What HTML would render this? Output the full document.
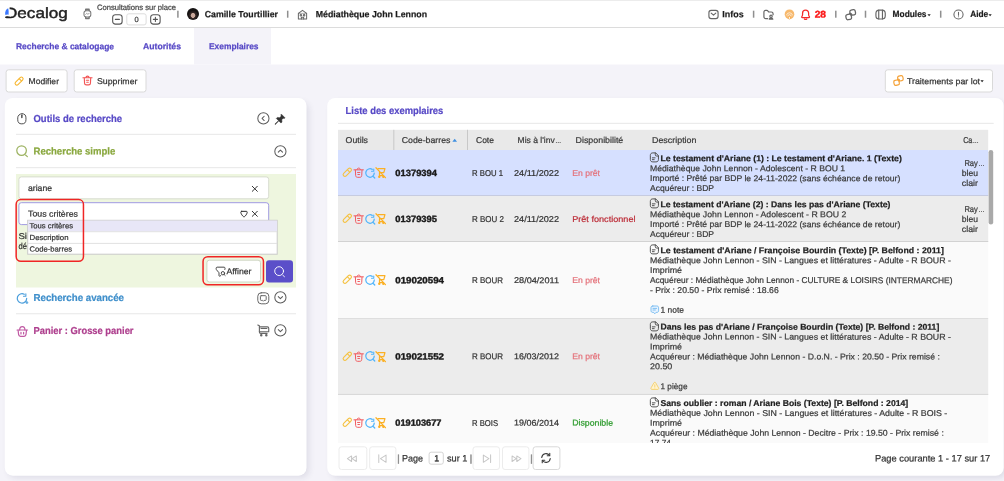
<!DOCTYPE html>
<html lang="fr">
<head>
<meta charset="utf-8">
<title>Decalog - Exemplaires</title>
<style>
html,body{margin:0;padding:0;background:#f4f3f9;overflow:hidden;}
body{font-family:"Liberation Sans",sans-serif;width:1004px;height:481px;overflow:hidden;position:relative;}
#app{will-change:transform;position:absolute;left:0;top:0;width:1004px;height:481px;overflow:hidden;background:#f4f3f9;}
#tb{position:absolute;left:0;top:0;width:1004px;height:443px;overflow:hidden;}
.t{-webkit-text-stroke:0.22px currentColor;transform-origin:0 50%;position:absolute;white-space:pre;line-height:12px;height:12px;color:#333;display:block;}
.b{position:absolute;box-sizing:border-box;display:block;}
.i{position:absolute;fill:none;stroke:currentColor;stroke-linecap:round;stroke-linejoin:round;overflow:visible;}
</style>
</head>
<body>
<div id="app">
<svg class="b" style="left:-1px;top:-1px" width="1006" height="30"><rect x="1" y="1" width="1004" height="28" fill="#fff"/><rect x="1" y="1" width="1004" height="1" fill="#ececec"/><rect x="1" y="28" width="1004" height="1" fill="#dcdcdc"/></svg>
<svg class="b" style="left:-1px;top:27px" width="1006" height="39"><rect x="1" y="1" width="1004" height="36.5" fill="#fff"/></svg>
<svg class="b" style="left:193px;top:27px" width="79" height="39"><rect x="1" y="1" width="77" height="36.5" fill="#f4f3f9"/></svg>
<svg class="i" style="left:83.30px;top:8.45px;width:8.80px;height:11.70px;color:#757575;stroke-width:2.1;" viewBox="0 0 18 24"><rect x="2" y="5.500" width="14" height="13" rx="4.500"/><path d="M5.500 5V2.500h7V5M5.500 19v2.500h7V19" stroke-width="2.800"/><path d="M5.500 13l2.200-2 2 1.600 2.800-1.200" stroke-width="1.400"/></svg>
<svg class="i" style="left:112.15px;top:13.90px;width:10.80px;height:10.80px;color:#555;stroke-width:2.4;" viewBox="0 0 24 24"><rect x="1.5" y="1.5" width="21" height="21" rx="6"/><path d="M7.5 12h9"/></svg>
<svg class="b" style="left:125px;top:12px" width="23" height="15"><rect x="1.8" y="1.8" width="19.3" height="11.1" rx="2" fill="#fff" stroke="#dcdcdc" stroke-width="1"/></svg>
<svg class="i" style="left:149.60px;top:13.90px;width:10.80px;height:10.80px;color:#555;stroke-width:2.4;" viewBox="0 0 24 24"><rect x="1.5" y="1.5" width="21" height="21" rx="6"/><path d="M7.5 12h9M12 7.5v9"/></svg>
<svg class="b" style="left:176px;top:9px" width="4" height="10"><rect x="1.15" y="1.7" width="1.5" height="7" fill="#8f8f8f"/></svg>
<div class="b" style="left:187px;top:8px;width:12px;height:12px;border-radius:50%;background:radial-gradient(circle at 50% 62%, #c9a79a 0 2.2px, #3a2a28 2.6px, #151212 5px);"></div>
<svg class="b" style="left:285px;top:9px" width="5" height="10"><rect x="1.95" y="1.7" width="1.5" height="7" fill="#8f8f8f"/></svg>
<svg class="i" style="left:297.40px;top:8.80px;width:11.00px;height:11.00px;color:#666;stroke-width:2.2;" viewBox="0 0 24 24"><path d="M3 22V9.5L12 3l9 6.5V22z"/><path d="M3 9.5h18" stroke-width="1.2"/><circle cx="8.5" cy="13.5" r="1.7"/><circle cx="15.5" cy="13.5" r="1.7"/><path d="M9.5 22v-4h5v4"/></svg>
<svg class="i" style="left:707.90px;top:8.80px;width:11.00px;height:11.00px;color:#666;stroke-width:2.5;" viewBox="0 0 24 24"><rect x="2" y="3" width="20" height="18" rx="5"/><path d="M7 9l5 4.5L17 9"/></svg>
<svg class="b" style="left:751px;top:9px" width="5" height="10"><rect x="1.85" y="1.7" width="1.5" height="7" fill="#8f8f8f"/></svg>
<svg class="i" style="left:763.20px;top:9.00px;width:11.00px;height:11.00px;color:#666;stroke-width:2.6;" viewBox="0 0 24 24"><path d="M10 21H6a4 4 0 0 1-4-4V6.5A3.5 3.5 0 0 1 5.500 3h2.800c1 0 1.900.5 2.400 1.300l.6 1c.5.800 1.400 1.200 2.300 1.200H18a4 4 0 0 1 4 4v2"/><circle cx="17.5" cy="16" r="2.6"/><path d="M13.500 22c.6-1.800 2.200-2.600 4-2.600s3.400.8 4 2.600z"/></svg>
<svg class="i" style="left:783.50px;top:9.10px;width:11.00px;height:11.00px;color:#f5a748;stroke-width:1.2;" viewBox="0 0 24 24"><circle cx="12" cy="11.500" r="10.500" fill="currentColor" stroke="none" opacity=".8"/><path d="M5.500 13a6.800 6.800 0 0 1 13 0M8.300 15a3.900 3.900 0 0 1 7.400 0" stroke="#fff" stroke-width="1.700" opacity=".85"/><circle cx="12" cy="19.500" r="2.600" fill="#fff" stroke="currentColor" stroke-width="1.600"/></svg>
<svg class="i" style="left:800.10px;top:8.60px;width:11.20px;height:11.20px;color:#f42a2a;stroke-width:2.7;" viewBox="0 0 24 24"><path d="M12 2.500c-3.900 0-6.500 2.900-6.500 6.500v3.500c0 1.400-.6 2.600-1.600 3.700-.7.800-.2 2.300 1 2.300h14.200c1.200 0 1.700-1.500 1-2.300-1-1.100-1.600-2.300-1.600-3.700V9c0-3.600-2.600-6.500-6.500-6.500z"/><path d="M9.500 21.500c.7.700 1.500 1 2.500 1s1.800-.3 2.500-1"/></svg>
<svg class="b" style="left:834px;top:9px" width="4" height="10"><rect x="1.05" y="1.7" width="1.5" height="7" fill="#8f8f8f"/></svg>
<svg class="i" style="left:845.20px;top:8.80px;width:11.40px;height:11.40px;color:#666;stroke-width:2.7;" viewBox="0 0 24 24"><rect x="10.500" y="1.800" width="11.500" height="11" rx="3.400" transform="rotate(-12 16 7.500)"/><rect x="2" y="11.200" width="11.500" height="11" rx="3.400" transform="rotate(-12 8 16.500)"/><path d="M9.800 9.500c2-.8 4 .2 4.500 2.500"/></svg>
<svg class="b" style="left:863px;top:9px" width="5" height="10"><rect x="1.75" y="1.7" width="1.5" height="7" fill="#8f8f8f"/></svg>
<svg class="i" style="left:875.00px;top:8.90px;width:11.20px;height:11.20px;color:#666;stroke-width:2.5;" viewBox="0 0 24 24"><rect x="2" y="2.500" width="20" height="19" rx="7"/><path d="M8 2.500v19M16 2.500v19"/></svg>
<svg class="i" style="left:926.70px;top:12.80px;width:4.20px;height:4.20px;color:#222;stroke-width:1.6;" viewBox="0 0 10 10"><path d="M1 3h8L5 8z" fill="currentColor" stroke="none"/></svg>
<svg class="b" style="left:938px;top:9px" width="5" height="10"><rect x="1.95" y="1.7" width="1.5" height="7" fill="#8f8f8f"/></svg>
<svg class="i" style="left:952.90px;top:9.00px;width:11.00px;height:11.00px;color:#666;stroke-width:2.3;" viewBox="0 0 24 24"><circle cx="12" cy="12" r="10"/><path d="M12 7v6.500M12 16.800v.2"/></svg>
<svg class="i" style="left:988.40px;top:12.80px;width:4.20px;height:4.20px;color:#222;stroke-width:1.6;" viewBox="0 0 10 10"><path d="M1 3h8L5 8z" fill="currentColor" stroke="none"/></svg>
<svg class="b" style="left:4px;top:68px" width="65" height="26"><rect x="2.1" y="1.8" width="61" height="22.2" rx="2.5" fill="#fff" stroke="#d9d9d9" stroke-width="1"/></svg>
<svg class="b" style="left:72px;top:68px" width="76" height="26"><rect x="2.2" y="1.8" width="71.8" height="22.2" rx="2.5" fill="#fff" stroke="#d9d9d9" stroke-width="1"/></svg>
<svg class="b" style="left:883px;top:68px" width="111" height="26"><rect x="2.3" y="1.8" width="107.2" height="22.2" rx="2.5" fill="#fff" stroke="#d9d9d9" stroke-width="1"/></svg>
<svg class="i" style="left:14.40px;top:75.60px;width:10.20px;height:10.20px;color:#f7b731;stroke-width:2.6;" viewBox="0 0 24 24"><path d="M14.500 3.800a4 4 0 0 1 5.700 5.700L9.500 20.200a4 4 0 0 1-5.700-5.700z"/><path d="M12.500 6.500l5 5"/></svg>
<svg class="i" style="left:82.40px;top:75.40px;width:11.00px;height:11.00px;color:#f25555;stroke-width:2.5;" viewBox="0 0 24 24"><path d="M2 6h20M8.500 5.500c.3-2.200 1.500-3.200 3.500-3.200s3.200 1 3.500 3.200"/><path d="M5 6.500l.6 11.500c.1 2.300 1.500 3.700 3.900 3.700h5c2.400 0 3.800-1.400 3.900-3.700L19 6.500"/><path d="M9.500 11.500h5M10.300 15.800h3.400"/></svg>
<svg class="i" style="left:892.80px;top:75.40px;width:11.00px;height:11.00px;color:#f5a33a;stroke-width:2.6;" viewBox="0 0 24 24"><rect x="10.500" y="1.800" width="11.500" height="11" rx="3.400" transform="rotate(-12 16 7.500)"/><rect x="2" y="11.200" width="11.500" height="11" rx="3.400" transform="rotate(-12 8 16.500)"/><path d="M9.800 9.500c2-.8 4 .2 4.500 2.500"/></svg>
<svg class="i" style="left:979.90px;top:79.30px;width:4.20px;height:4.20px;color:#222;stroke-width:1.6;" viewBox="0 0 10 10"><path d="M1 3h8L5 8z" fill="currentColor" stroke="none"/></svg>
<div class="b" style="left:5px;top:99px;width:301px;height:376px;border-radius:8px;box-shadow:3px 3px 6px rgba(40,40,80,0.10);"></div>
<svg class="b" style="left:3px;top:97px" width="305" height="380"><rect x="1.8" y="1" width="301.7" height="377.7" rx="8" fill="#fff"/></svg>
<svg class="i" style="left:17.15px;top:112.70px;width:9.70px;height:11.60px;color:#4a4a4a;stroke-width:2;" viewBox="0 0 20 24"><rect x="1.500" y="1.500" width="17" height="21" rx="8.500"/><path d="M10 4.500v5" stroke-width="3"/></svg>
<svg class="i" style="left:257.20px;top:112.10px;width:12.80px;height:12.80px;color:#5a5a5a;stroke-width:1.9;" viewBox="0 0 24 24"><circle cx="12" cy="12" r="10.500"/><path d="M13.500 8l-4 4 4 4"/></svg>
<svg class="i" style="left:274.00px;top:112.60px;width:12.40px;height:12.40px;color:#333;stroke-width:1.5;" viewBox="0 0 24 24"><path d="M14.500 2.500l7 7-2 1-1.500-.5-3 3 .5 4.500-2 2L4.500 10.500l2-2 4.500.5 3-3-.5-1.500z" fill="currentColor" stroke-width="1"/><path d="M8.500 15.500l-6 6" stroke-width="2"/></svg>
<svg class="b" style="left:15px;top:132px" width="282" height="4"><rect x="1" y="1.8" width="280" height="1.2" fill="#ebebeb"/></svg>
<svg class="i" style="left:15.80px;top:145.40px;width:12.40px;height:12.40px;color:#9db362;stroke-width:2.4;" viewBox="0 0 24 24"><circle cx="10.800" cy="10.800" r="9.300"/><path d="M18.500 19.500l3.500 3"/></svg>
<svg class="i" style="left:273.90px;top:145.10px;width:12.80px;height:12.80px;color:#5a5a5a;stroke-width:1.9;" viewBox="0 0 24 24"><circle cx="12" cy="12" r="10.500"/><path d="M8 13.500l4-4 4 4"/></svg>
<svg class="b" style="left:15px;top:166px" width="282" height="4"><rect x="1" y="1" width="280" height="1.2" fill="#ebebeb"/></svg>
<svg class="b" style="left:15px;top:173px" width="282" height="116"><rect x="1" y="1" width="280" height="113.5" fill="#eef6df"/></svg>
<svg class="b" style="left:17px;top:175px" width="254" height="26"><rect x="1.9" y="1.9" width="249.8" height="21.9" rx="2.5" fill="#fff" stroke="#d8dcd0" stroke-width="1"/></svg>
<svg class="i" style="left:251.40px;top:184.50px;width:7.60px;height:7.60px;color:#2a2a2a;stroke-width:3;" viewBox="0 0 24 24"><path d="M4 4l16 16M20 4L4 20"/></svg>
<svg class="b" style="left:17px;top:201px" width="254" height="26"><rect x="1.9" y="1.7" width="249.8" height="21.9" rx="2.5" fill="#fff" stroke="#a19be2" stroke-width="1"/></svg>
<svg class="i" style="left:239.70px;top:209.90px;width:8.00px;height:8.00px;color:#2a2a2a;stroke-width:3;" viewBox="0 0 24 24"><path d="M5 4h14c2 0 3 1.500 2.500 3.500-1 4.500-4 9.500-8 12.500-1 .8-2 .8-3 0-4-3-7-8-8-12.500C2 5.500 3 4 5 4z"/></svg>
<svg class="i" style="left:251.40px;top:210.10px;width:7.60px;height:7.60px;color:#2a2a2a;stroke-width:3;" viewBox="0 0 24 24"><path d="M4 4l16 16M20 4L4 20"/></svg>
<span class="t" style="left:5px;top:6px;transform:translate(0.00px,0.94px) rotate(0.03deg) scaleX(1.1566);font-size:14.8px;color:#222;-webkit-text-stroke:0.42px #222;">Decalog</span>
<svg class="b" style="left:3px;top:4px" width="8" height="14"><rect x="1" y="1" width="5.6" height="11.4" fill="#fff"/></svg>
<svg class="b" style="left:4px;top:15px" width="7" height="5"><rect x="1" y="1.4" width="5" height="1.7" rx="0.8" fill="#222"/></svg>
<svg class="i" style="left:4.7px;top:7.5px;width:4.2px;height:7.4px;stroke:none" viewBox="0 0 10 17"><path d="M0.500 16.500C-.5 9 2 3 7.500 .5c1.500 4 1.500 11 1 16L6.500 14.500 4.500 16.500 3 15z" fill="#3b78ff"/></svg>
<span class="t" style="left:97px;top:1px;transform:translate(0.00px,0.88px) rotate(0.03deg) scaleX(0.9747);font-size:7.8px;color:#444;">Consultations sur place</span>
<span class="t" style="left:134px;top:14px;transform:translate(0.60px,0.08px) rotate(0.03deg);font-size:7.5px;color:#444;">0</span>
<span class="t" style="left:204px;top:8px;transform:translate(0.70px,0.25px) rotate(0.03deg) scaleX(0.9727);font-size:9px;font-weight:700;color:#1c1c1c;">Camille Tourtillier</span>
<span class="t" style="left:315px;top:8px;transform:translate(0.80px,0.25px) rotate(0.03deg) scaleX(0.9754);font-size:9px;font-weight:700;color:#1c1c1c;">Médiathèque John Lennon</span>
<span class="t" style="left:722px;top:8px;transform:translate(0.30px,0.25px) rotate(0.03deg) scaleX(0.9907);font-size:9px;font-weight:700;color:#1c1c1c;">Infos</span>
<span class="t" style="left:814px;top:8px;transform:translate(0.70px,0.45px) rotate(0.03deg) scaleX(1.0589);font-size:9.6px;font-weight:700;color:#fb1717;-webkit-text-stroke:0.4px #fb1717;">28</span>
<span class="t" style="left:892px;top:8px;transform:translate(0.60px,0.25px) rotate(0.03deg) scaleX(0.9284);font-size:9px;font-weight:700;color:#1c1c1c;">Modules</span>
<span class="t" style="left:970px;top:8px;transform:translate(0.20px,0.25px) rotate(0.03deg) scaleX(0.9223);font-size:9px;font-weight:700;color:#1c1c1c;">Aide</span>
<span class="t" style="left:16px;top:40px;transform:translate(0.00px,0.33px) rotate(0.03deg) scaleX(0.9590);font-size:8.8px;font-weight:700;color:#5749c6;">Recherche &amp; catalogage</span>
<span class="t" style="left:143px;top:40px;transform:translate(0.00px,0.33px) rotate(0.03deg) scaleX(0.9838);font-size:8.8px;font-weight:700;color:#5749c6;">Autorités</span>
<span class="t" style="left:209px;top:40px;transform:translate(0.00px,0.33px) rotate(0.03deg) scaleX(0.9548);font-size:8.8px;font-weight:700;color:#5749c6;">Exemplaires</span>
<span class="t" style="left:28px;top:75px;transform:translate(0.50px,0.12px) rotate(0.03deg) scaleX(1.0088);font-size:8.5px;">Modifier</span>
<span class="t" style="left:97px;top:75px;transform:translate(0.00px,0.12px) rotate(0.03deg) scaleX(1.0327);font-size:8.5px;">Supprimer</span>
<span class="t" style="left:907px;top:75px;transform:translate(0.00px,0.12px) rotate(0.03deg) scaleX(1.0348);font-size:8.5px;">Traitements par lot</span>
<span class="t" style="left:33px;top:113px;transform:translate(0.50px,0.07px) rotate(0.03deg) scaleX(0.9390);font-size:10.1px;font-weight:700;color:#5749c6;">Outils de recherche</span>
<span class="t" style="left:33px;top:145px;transform:translate(0.50px,0.47px) rotate(0.03deg) scaleX(0.9467);font-size:10.1px;font-weight:700;color:#8aa83f;">Recherche simple</span>
<span class="t" style="left:28px;top:181px;transform:translate(0.00px,0.92px) rotate(0.03deg) scaleX(1.0152);font-size:8.5px;">ariane</span>
<span class="t" style="left:28px;top:207px;transform:translate(0.00px,0.62px) rotate(0.03deg) scaleX(1.0376);font-size:8.5px;">Tous critères</span>
<span class="t" style="left:18px;top:229px;transform:translate(0.50px,0.92px) rotate(0.03deg) scaleX(1.1240);font-size:8.5px;">Si</span>
<span class="t" style="left:18px;top:239px;transform:translate(0.50px,0.92px) rotate(0.03deg) scaleX(0.8977);font-size:8.5px;">dé</span>
<svg class="b" style="left:26px;top:218px" width="253" height="38"><rect x="1.7" y="2.3" width="249.5" height="33.9" rx="0" fill="#fff" stroke="#c9c9c9" stroke-width="1"/></svg>
<svg class="b" style="left:27px;top:219px" width="251" height="14"><rect x="1" y="1.6" width="249" height="10.8" fill="#e8e6f7"/></svg>
<svg class="b" style="left:27px;top:230px" width="251" height="4"><rect x="1" y="1.3" width="249" height="0.9" fill="#dedede"/></svg>
<svg class="b" style="left:27px;top:241px" width="251" height="4"><rect x="1" y="1.9" width="249" height="0.9" fill="#dedede"/></svg>
<svg class="b" style="left:205px;top:258px" width="57" height="26"><rect x="1.9" y="2.2" width="53.6" height="21.8" rx="2.5" fill="#fff" stroke="#d0d6c4" stroke-width="1"/></svg>
<svg class="i" style="left:214.50px;top:265.80px;width:11.20px;height:11.20px;color:#444;stroke-width:2.1;" viewBox="0 0 24 24"><path d="M12.500 20.500l-2 1.300c-.8.500-1.900-.1-1.900-1.100v-6.200L3.300 8.200C2.700 7.500 2.500 6.800 2.500 6V4.500c0-1.100.9-2 2-2h15c1.100 0 2 .9 2 2V6c0 .6-.2 1.300-.6 1.800"/><circle cx="17" cy="15.500" r="3.600"/><path d="M19.800 18.300l2 2"/></svg>
<svg class="b" style="left:265px;top:259px" width="29" height="25"><rect x="1" y="1.2" width="27" height="22.2" rx="3" fill="#5b4fc9"/></svg>
<svg class="i" style="left:274.10px;top:265.50px;width:11.40px;height:11.40px;color:#fff;stroke-width:2;" viewBox="0 0 24 24"><circle cx="10.800" cy="10.800" r="9.300"/><path d="M18.500 19.500l3.500 3"/></svg>
<svg class="b" style="left:14px;top:197px" width="72" height="66"><rect x="2.15" y="2.55" width="67.3" height="61.7" rx="4.75" fill="none" stroke="#f02525" stroke-width="1.5"/></svg>
<svg class="b" style="left:201px;top:254px" width="65" height="33"><rect x="2.05" y="2.65" width="60.4" height="28.1" rx="4.75" fill="none" stroke="#f02525" stroke-width="1.5"/></svg>
<svg class="i" style="left:15.70px;top:291.50px;width:12.80px;height:12.80px;color:#4c9fdc;stroke-width:2.3;" viewBox="0 0 24 24"><path d="M20 12a8.800 8.800 0 1 1-4.500-7.700"/><path d="M14 8h4.500V3.500" stroke-width="2"/><path d="M20.500 17.500l.8 1.700 1.700.8-1.700.8-.8 1.700-.8-1.700-1.700-.8 1.700-.8z" fill="currentColor" stroke-width="1"/></svg>
<svg class="i" style="left:257.20px;top:291.60px;width:12.60px;height:12.60px;color:#666;stroke-width:1.9;" viewBox="0 0 24 24"><rect x="1.500" y="1.500" width="21" height="21" rx="6.500"/><path d="M8 7h8c1 0 1.500.5 1.500 1.500v6c0 1-.5 1.500-1.500 1.500h-2.500L12 17.500 10.500 16H8c-1 0-1.500-.5-1.500-1.500v-6C6.500 7.500 7 7 8 7z"/></svg>
<svg class="i" style="left:273.90px;top:291.30px;width:12.80px;height:12.80px;color:#5a5a5a;stroke-width:1.9;" viewBox="0 0 24 24"><circle cx="12" cy="12" r="10.500"/><path d="M8 10.500l4 4 4-4"/></svg>
<svg class="b" style="left:15px;top:312px" width="282" height="4"><rect x="1" y="1.1" width="280" height="1.2" fill="#ebebeb"/></svg>
<svg class="i" style="left:15.70px;top:324.70px;width:12.60px;height:12.60px;color:#c05aa3;stroke-width:2.3;" viewBox="0 0 24 24"><path d="M2 9.500h20"/><path d="M4 10l1 8.500c.3 2 1.500 3 3.500 3h7c2 0 3.200-1 3.500-3l1-8.500"/><path d="M7 9.500c0-4 2-6.500 5-6.500s5 2.500 5 6.500" /><path d="M9.500 14v3M14.500 14v3"/></svg>
<svg class="i" style="left:257.20px;top:324.30px;width:12.80px;height:12.80px;color:#666;stroke-width:2.1;" viewBox="0 0 24 24"><path d="M1.500 2l3 1.500v11.500c0 1.500 1 2.500 2.500 2.500h12"/><path d="M4.500 5.500h15c1.500 0 2.500 1 2.500 2.500v6.500H4.500"/><path d="M7.500 8.500h11"/><circle cx="8" cy="21" r="1.300" fill="currentColor"/><circle cx="17.500" cy="21" r="1.300" fill="currentColor"/></svg>
<svg class="i" style="left:273.90px;top:324.20px;width:12.80px;height:12.80px;color:#5a5a5a;stroke-width:1.9;" viewBox="0 0 24 24"><circle cx="12" cy="12" r="10.500"/><path d="M8 10.500l4 4 4-4"/></svg>
<div class="b" style="left:328px;top:99px;width:675px;height:376px;border-radius:8px;box-shadow:3px 3px 6px rgba(40,40,80,0.12);"></div>
<svg class="b" style="left:326px;top:97px" width="679" height="380"><rect x="1.2" y="1" width="676.5" height="377.8" rx="8" fill="#fff"/></svg>
<svg class="b" style="left:337px;top:121px" width="658" height="4"><rect x="1" y="1.8" width="655.7" height="1.2" fill="#ebebeb"/></svg>
<svg class="b" style="left:337px;top:128px" width="653" height="23"><rect x="1" y="1.8" width="650.2" height="20.2" fill="#e9e9e9"/></svg>
<svg class="b" style="left:392px;top:128px" width="4" height="23"><rect x="1.3" y="1.8" width="1" height="20.2" fill="#c8c8c8"/></svg>
<svg class="b" style="left:466px;top:128px" width="3" height="23"><rect x="1" y="1.8" width="1" height="20.2" fill="#c8c8c8"/></svg>
<svg class="i" style="left:452.20px;top:138.00px;width:5.40px;height:4.20px;color:#3f8fe0;stroke-width:1.6;" viewBox="0 0 10 8"><path d="M0.500 7h9L5 1.500z" fill="currentColor" stroke="none"/></svg>
<span class="t" style="left:29px;top:220px;transform:translate(0.50px,0.35px) rotate(0.03deg) scaleX(1.0380);font-size:7.4px;">Tous critères</span>
<span class="t" style="left:29px;top:231px;transform:translate(0.50px,0.95px) rotate(0.03deg) scaleX(1.0549);font-size:7.4px;">Description</span>
<span class="t" style="left:29px;top:243px;transform:translate(0.50px,0.55px) rotate(0.03deg) scaleX(1.0346);font-size:7.4px;">Code-barres</span>
<span class="t" style="left:226px;top:265px;transform:translate(0.50px,0.22px) rotate(0.03deg) scaleX(1.0237);font-size:8.5px;">Affiner</span>
<span class="t" style="left:33px;top:291px;transform:translate(0.50px,0.97px) rotate(0.03deg) scaleX(0.9599);font-size:10.1px;font-weight:700;color:#3f8fcb;">Recherche avancée</span>
<span class="t" style="left:33px;top:324px;transform:translate(0.50px,0.97px) rotate(0.03deg) scaleX(0.9283);font-size:10.1px;font-weight:700;color:#ae3f8e;">Panier : Grosse panier</span>
<span class="t" style="left:345px;top:104px;transform:translate(0.60px,0.87px) rotate(0.03deg) scaleX(0.9312);font-size:10.1px;font-weight:700;color:#5749c6;">Liste des exemplaires</span>
<span class="t" style="left:345px;top:133px;transform:translate(0.60px,0.92px) rotate(0.03deg) scaleX(1.0306);font-size:8.5px;color:#3a3a3a;">Outils</span>
<span class="t" style="left:401px;top:133px;transform:translate(0.70px,0.92px) rotate(0.03deg) scaleX(1.0328);font-size:8.5px;color:#3a3a3a;">Code-barres</span>
<span class="t" style="left:476px;top:133px;transform:translate(0.00px,0.92px) rotate(0.03deg);font-size:8.5px;color:#3a3a3a;">Cote</span>
<span class="t" style="left:517px;top:133px;transform:translate(0.60px,0.92px) rotate(0.03deg);font-size:8.5px;color:#3a3a3a;">Mis à l'inv</span>
<span class="t" style="left:555px;top:134px;transform:translate(0.20px,0.91px) rotate(0.03deg);font-size:6px;color:#3a3a3a;">…</span>
<span class="t" style="left:575px;top:133px;transform:translate(0.60px,0.92px) rotate(0.03deg) scaleX(1.0405);font-size:8.5px;color:#3a3a3a;">Disponibilité</span>
<span class="t" style="left:652px;top:133px;transform:translate(0.00px,0.92px) rotate(0.03deg) scaleX(1.0463);font-size:8.5px;color:#3a3a3a;">Description</span>
<span class="t" style="left:963px;top:133px;transform:translate(0.20px,0.92px) rotate(0.03deg) scaleX(0.8500);font-size:8.5px;color:#3a3a3a;letter-spacing:-0.287px;">Ca</span>
<span class="t" style="left:972px;top:134px;transform:translate(0.80px,0.91px) rotate(0.03deg);font-size:6px;color:#3a3a3a;">…</span>
<div id="tb">
<svg class="b" style="left:337px;top:149px" width="653" height="48"><rect x="1" y="1" width="650.2" height="46" fill="#d6e0ff"/><rect x="1" y="46" width="650.2" height="1" fill="#c6cbe0"/></svg>
<svg class="i" style="left:341.90px;top:167.20px;width:10.60px;height:10.60px;color:#f5c242;stroke-width:2.6;" viewBox="0 0 24 24"><path d="M14.500 3.800a4 4 0 0 1 5.700 5.700L9.500 20.200a4 4 0 0 1-5.700-5.700z"/><path d="M12.500 6.500l5 5"/></svg>
<svg class="i" style="left:353.00px;top:167.10px;width:11.40px;height:11.40px;color:#f0595e;stroke-width:2.1;" viewBox="0 0 24 24"><path d="M2 6h20M8.500 5.500c.3-2.200 1.500-3.200 3.500-3.200s3.200 1 3.500 3.200"/><path d="M5 6.500l.6 11.500c.1 2.300 1.500 3.700 3.900 3.700h5c2.400 0 3.800-1.400 3.900-3.700L19 6.500"/><path d="M9.500 11.500h5M10.300 15.800h3.400"/></svg>
<svg class="i" style="left:364.00px;top:167.00px;width:12.00px;height:12.00px;color:#4fb4fb;stroke-width:2.5;" viewBox="0 0 24 24"><path d="M20.500 12a8.500 8.500 0 1 1-4-7.200"/><path d="M15 8.500h4.500V4" stroke-width="2.200"/><path d="M19 19.500l2.500 2.500"/></svg>
<svg class="i" style="left:375.40px;top:167.10px;width:11.40px;height:11.40px;color:#fbb024;stroke-width:2.6;" viewBox="0 0 24 24"><path d="M6.500 3.500H21l-2.500 8.500H9.500"/><path d="M9.500 12.500v5.500h8"/><circle cx="9" cy="20.500" r="1.200" fill="currentColor"/><circle cx="17.500" cy="20.500" r="1.200" fill="currentColor"/><path d="M2 1.500l20 21"/></svg>
<svg class="i" style="left:649.40px;top:152.30px;width:10.80px;height:10.80px;color:#4a4a4a;stroke-width:2.1;" viewBox="0 0 24 24"><path d="M14 2H8.500C5 2 3 4 3 7.500v9C3 20 5 22 8.500 22h7c3.500 0 5.500-2 5.500-5.500V9z"/><path d="M14 2v4c0 2 1 3 3 3h4"/><path d="M7.500 13h6M7.500 17h4"/></svg>
<svg class="b" style="left:337px;top:195px" width="653" height="48"><rect x="1" y="1" width="650.2" height="46" fill="#ececec"/><rect x="1" y="46" width="650.2" height="1" fill="#d2d2d2"/></svg>
<svg class="i" style="left:341.90px;top:213.20px;width:10.60px;height:10.60px;color:#f5c242;stroke-width:2.6;" viewBox="0 0 24 24"><path d="M14.500 3.800a4 4 0 0 1 5.700 5.700L9.500 20.200a4 4 0 0 1-5.700-5.700z"/><path d="M12.500 6.500l5 5"/></svg>
<svg class="i" style="left:353.00px;top:213.10px;width:11.40px;height:11.40px;color:#f0595e;stroke-width:2.1;" viewBox="0 0 24 24"><path d="M2 6h20M8.500 5.500c.3-2.200 1.500-3.200 3.500-3.200s3.200 1 3.500 3.200"/><path d="M5 6.500l.6 11.500c.1 2.300 1.500 3.700 3.900 3.700h5c2.400 0 3.800-1.400 3.900-3.700L19 6.500"/><path d="M9.500 11.500h5M10.300 15.800h3.400"/></svg>
<svg class="i" style="left:364.00px;top:213.00px;width:12.00px;height:12.00px;color:#4fb4fb;stroke-width:2.5;" viewBox="0 0 24 24"><path d="M20.500 12a8.500 8.500 0 1 1-4-7.200"/><path d="M15 8.500h4.500V4" stroke-width="2.200"/><path d="M19 19.500l2.500 2.500"/></svg>
<svg class="i" style="left:375.40px;top:213.10px;width:11.40px;height:11.40px;color:#fbb024;stroke-width:2.6;" viewBox="0 0 24 24"><path d="M6.500 3.500H21l-2.500 8.500H9.500"/><path d="M9.500 12.500v5.500h8"/><circle cx="9" cy="20.500" r="1.200" fill="currentColor"/><circle cx="17.500" cy="20.500" r="1.200" fill="currentColor"/><path d="M2 1.500l20 21"/></svg>
<svg class="i" style="left:649.40px;top:198.30px;width:10.80px;height:10.80px;color:#4a4a4a;stroke-width:2.1;" viewBox="0 0 24 24"><path d="M14 2H8.500C5 2 3 4 3 7.500v9C3 20 5 22 8.500 22h7c3.500 0 5.500-2 5.500-5.500V9z"/><path d="M14 2v4c0 2 1 3 3 3h4"/><path d="M7.500 13h6M7.500 17h4"/></svg>
<svg class="b" style="left:337px;top:241px" width="653" height="79"><rect x="1" y="1" width="650.2" height="77" fill="#fafafa"/><rect x="1" y="77" width="650.2" height="1" fill="#dedede"/></svg>
<svg class="i" style="left:341.90px;top:274.40px;width:10.60px;height:10.60px;color:#f5c242;stroke-width:2.6;" viewBox="0 0 24 24"><path d="M14.500 3.800a4 4 0 0 1 5.700 5.700L9.500 20.200a4 4 0 0 1-5.700-5.700z"/><path d="M12.500 6.500l5 5"/></svg>
<svg class="i" style="left:353.00px;top:274.30px;width:11.40px;height:11.40px;color:#f0595e;stroke-width:2.1;" viewBox="0 0 24 24"><path d="M2 6h20M8.500 5.500c.3-2.200 1.500-3.200 3.500-3.200s3.200 1 3.500 3.200"/><path d="M5 6.500l.6 11.500c.1 2.300 1.500 3.700 3.900 3.700h5c2.400 0 3.800-1.400 3.900-3.700L19 6.500"/><path d="M9.500 11.500h5M10.300 15.800h3.400"/></svg>
<svg class="i" style="left:364.00px;top:274.20px;width:12.00px;height:12.00px;color:#4fb4fb;stroke-width:2.5;" viewBox="0 0 24 24"><path d="M20.500 12a8.500 8.500 0 1 1-4-7.200"/><path d="M15 8.500h4.500V4" stroke-width="2.200"/><path d="M19 19.500l2.500 2.500"/></svg>
<svg class="i" style="left:375.40px;top:274.30px;width:11.40px;height:11.40px;color:#fbb024;stroke-width:2.6;" viewBox="0 0 24 24"><path d="M6.500 3.500H21l-2.500 8.500H9.500"/><path d="M9.500 12.500v5.500h8"/><circle cx="9" cy="20.500" r="1.200" fill="currentColor"/><circle cx="17.500" cy="20.500" r="1.200" fill="currentColor"/><path d="M2 1.500l20 21"/></svg>
<svg class="i" style="left:649.40px;top:244.30px;width:10.80px;height:10.80px;color:#4a4a4a;stroke-width:2.1;" viewBox="0 0 24 24"><path d="M14 2H8.500C5 2 3 4 3 7.500v9C3 20 5 22 8.500 22h7c3.500 0 5.500-2 5.500-5.500V9z"/><path d="M14 2v4c0 2 1 3 3 3h4"/><path d="M7.500 13h6M7.500 17h4"/></svg>
<svg class="b" style="left:337px;top:318px" width="653" height="78"><rect x="1" y="1" width="650.2" height="75.9" fill="#ececec"/><rect x="1" y="75.9" width="650.2" height="1" fill="#d2d2d2"/></svg>
<svg class="i" style="left:341.90px;top:350.60px;width:10.60px;height:10.60px;color:#f5c242;stroke-width:2.6;" viewBox="0 0 24 24"><path d="M14.500 3.800a4 4 0 0 1 5.700 5.700L9.500 20.200a4 4 0 0 1-5.700-5.700z"/><path d="M12.500 6.500l5 5"/></svg>
<svg class="i" style="left:353.00px;top:350.50px;width:11.40px;height:11.40px;color:#f0595e;stroke-width:2.1;" viewBox="0 0 24 24"><path d="M2 6h20M8.500 5.500c.3-2.200 1.500-3.200 3.500-3.200s3.200 1 3.500 3.200"/><path d="M5 6.500l.6 11.500c.1 2.300 1.500 3.700 3.900 3.700h5c2.400 0 3.800-1.400 3.900-3.700L19 6.500"/><path d="M9.500 11.500h5M10.300 15.800h3.400"/></svg>
<svg class="i" style="left:364.00px;top:350.40px;width:12.00px;height:12.00px;color:#4fb4fb;stroke-width:2.5;" viewBox="0 0 24 24"><path d="M20.500 12a8.500 8.500 0 1 1-4-7.200"/><path d="M15 8.500h4.500V4" stroke-width="2.200"/><path d="M19 19.500l2.500 2.500"/></svg>
<svg class="i" style="left:375.40px;top:350.50px;width:11.40px;height:11.40px;color:#fbb024;stroke-width:2.6;" viewBox="0 0 24 24"><path d="M6.500 3.500H21l-2.500 8.500H9.500"/><path d="M9.500 12.500v5.500h8"/><circle cx="9" cy="20.500" r="1.200" fill="currentColor"/><circle cx="17.500" cy="20.500" r="1.200" fill="currentColor"/><path d="M2 1.500l20 21"/></svg>
<svg class="i" style="left:649.40px;top:320.70px;width:10.80px;height:10.80px;color:#4a4a4a;stroke-width:2.1;" viewBox="0 0 24 24"><path d="M14 2H8.500C5 2 3 4 3 7.500v9C3 20 5 22 8.500 22h7c3.500 0 5.500-2 5.500-5.500V9z"/><path d="M14 2v4c0 2 1 3 3 3h4"/><path d="M7.500 13h6M7.500 17h4"/></svg>
<svg class="b" style="left:337px;top:393px" width="653" height="59"><rect x="1" y="1.9" width="650.2" height="56" fill="#fafafa"/><rect x="1" y="56.9" width="650.2" height="1" fill="#d9d9d9"/></svg>
<svg class="i" style="left:341.90px;top:416.90px;width:10.60px;height:10.60px;color:#f5c242;stroke-width:2.6;" viewBox="0 0 24 24"><path d="M14.500 3.800a4 4 0 0 1 5.700 5.700L9.500 20.200a4 4 0 0 1-5.700-5.700z"/><path d="M12.500 6.500l5 5"/></svg>
<svg class="i" style="left:353.00px;top:416.80px;width:11.40px;height:11.40px;color:#f0595e;stroke-width:2.1;" viewBox="0 0 24 24"><path d="M2 6h20M8.500 5.500c.3-2.200 1.500-3.200 3.500-3.200s3.200 1 3.500 3.200"/><path d="M5 6.500l.6 11.500c.1 2.300 1.500 3.700 3.900 3.700h5c2.400 0 3.800-1.400 3.900-3.700L19 6.500"/><path d="M9.500 11.500h5M10.300 15.800h3.400"/></svg>
<svg class="i" style="left:364.00px;top:416.70px;width:12.00px;height:12.00px;color:#4fb4fb;stroke-width:2.5;" viewBox="0 0 24 24"><path d="M20.500 12a8.500 8.500 0 1 1-4-7.200"/><path d="M15 8.500h4.500V4" stroke-width="2.200"/><path d="M19 19.500l2.500 2.500"/></svg>
<svg class="i" style="left:375.40px;top:416.80px;width:11.40px;height:11.40px;color:#fbb024;stroke-width:2.6;" viewBox="0 0 24 24"><path d="M6.500 3.500H21l-2.500 8.500H9.500"/><path d="M9.500 12.500v5.500h8"/><circle cx="9" cy="20.500" r="1.200" fill="currentColor"/><circle cx="17.500" cy="20.500" r="1.200" fill="currentColor"/><path d="M2 1.500l20 21"/></svg>
<svg class="i" style="left:649.40px;top:397.00px;width:10.80px;height:10.80px;color:#4a4a4a;stroke-width:2.1;" viewBox="0 0 24 24"><path d="M14 2H8.500C5 2 3 4 3 7.500v9C3 20 5 22 8.500 22h7c3.500 0 5.500-2 5.500-5.500V9z"/><path d="M14 2v4c0 2 1 3 3 3h4"/><path d="M7.500 13h6M7.500 17h4"/></svg>
<svg class="i" style="left:649.80px;top:305.28px;width:9.60px;height:9.60px;color:#5fb0ee;stroke-width:1.9;" viewBox="0 0 24 24"><path d="M7 2.500h10c3 0 4.500 1.500 4.500 4.500v7c0 3-1.500 4.500-4.500 4.500h-2L12 22l-3-3.500H7c-3 0-4.500-1.500-4.500-4.500V7c0-3 1.500-4.500 4.500-4.500z" fill="#e6f3ff"/><path d="M7.500 8.500h9M7.500 12.500h6"/></svg>
<svg class="i" style="left:649.80px;top:381.18px;width:9.60px;height:9.60px;color:#f3c64e;stroke-width:1.8;" viewBox="0 0 24 24"><path d="M10 4.200c.9-1.600 3.100-1.600 4 0l7.500 13.300c.9 1.600-.2 3.500-2 3.500h-15c-1.800 0-2.900-1.900-2-3.500z" fill="#fff3cf"/><path d="M12 9.500v4.500M12 17.300v.2"/></svg>
<span class="t" style="left:395px;top:167px;transform:translate(0.30px,0.10px) rotate(0.03deg) scaleX(1.0413);font-size:9px;font-weight:700;color:#1a1a1a;-webkit-text-stroke:0.38px #1a1a1a;">01379394</span>
<span class="t" style="left:472px;top:166px;transform:translate(0.00px,0.92px) rotate(0.03deg) scaleX(0.9113);font-size:8.5px;">R BOU 1</span>
<span class="t" style="left:514px;top:166px;transform:translate(0.00px,0.92px) rotate(0.03deg) scaleX(1.0734);font-size:8.5px;">24/11/2022</span>
<span class="t" style="left:572px;top:166px;transform:translate(0.20px,0.92px) rotate(0.03deg) scaleX(1.0144);font-size:8.5px;color:#e4727b;">En prêt</span>
<span class="t" style="left:660px;top:152px;transform:translate(0.50px,0.22px) rotate(0.03deg) scaleX(1.0212);font-size:8.5px;font-weight:700;color:#1e1e1e;">Le testament d'Ariane (1) : Le testament d'Ariane. 1 (Texte)</span>
<span class="t" style="left:650px;top:162px;transform:translate(0.00px,0.15px) rotate(0.03deg) scaleX(1.0200);font-size:8.5px;color:#3a3a3a;">Médiathèque John Lennon - Adolescent - R BOU 1</span>
<span class="t" style="left:650px;top:172px;transform:translate(0.00px,0.08px) rotate(0.03deg) scaleX(1.0161);font-size:8.5px;color:#3a3a3a;">Importé : Prêté par BDP le 24-11-2022 (sans échéance de retour)</span>
<span class="t" style="left:650px;top:182px;transform:translate(0.00px,0.01px) rotate(0.03deg) scaleX(1.0034);font-size:8.5px;color:#3a3a3a;">Acquéreur : BDP</span>
<span class="t" style="left:964px;top:156px;transform:translate(0.40px,0.92px) rotate(0.03deg) scaleX(0.8860);font-size:8.5px;color:#3a3a3a;">Ray</span>
<span class="t" style="left:978px;top:157px;transform:translate(0.40px,0.91px) rotate(0.03deg);font-size:6px;color:#3a3a3a;">…</span>
<span class="t" style="left:961px;top:166px;transform:translate(0.80px,0.92px) rotate(0.03deg) scaleX(1.0076);font-size:8.5px;color:#3a3a3a;">bleu</span>
<span class="t" style="left:961px;top:176px;transform:translate(0.80px,0.92px) rotate(0.03deg) scaleX(1.0389);font-size:8.5px;color:#3a3a3a;">clair</span>
<span class="t" style="left:395px;top:213px;transform:translate(0.30px,0.10px) rotate(0.03deg) scaleX(1.0413);font-size:9px;font-weight:700;color:#1a1a1a;-webkit-text-stroke:0.38px #1a1a1a;">01379395</span>
<span class="t" style="left:472px;top:212px;transform:translate(0.00px,0.92px) rotate(0.03deg) scaleX(0.9407);font-size:8.5px;">R BOU 2</span>
<span class="t" style="left:514px;top:212px;transform:translate(0.00px,0.92px) rotate(0.03deg) scaleX(1.0734);font-size:8.5px;">24/11/2022</span>
<span class="t" style="left:572px;top:212px;transform:translate(0.20px,0.92px) rotate(0.03deg) scaleX(1.0715);font-size:8.5px;color:#bd2f3a;">Prêt fonctionnel</span>
<span class="t" style="left:660px;top:198px;transform:translate(0.50px,0.22px) rotate(0.03deg) scaleX(1.0160);font-size:8.5px;font-weight:700;color:#1e1e1e;">Le testament d'Ariane (2) : Dans les pas d'Ariane (Texte)</span>
<span class="t" style="left:650px;top:208px;transform:translate(0.00px,0.15px) rotate(0.03deg) scaleX(1.0257);font-size:8.5px;color:#3a3a3a;">Médiathèque John Lennon - Adolescent - R BOU 2</span>
<span class="t" style="left:650px;top:218px;transform:translate(0.00px,0.08px) rotate(0.03deg) scaleX(1.0161);font-size:8.5px;color:#3a3a3a;">Importé : Prêté par BDP le 24-11-2022 (sans échéance de retour)</span>
<span class="t" style="left:650px;top:228px;transform:translate(0.00px,0.01px) rotate(0.03deg) scaleX(1.0034);font-size:8.5px;color:#3a3a3a;">Acquéreur : BDP</span>
<span class="t" style="left:964px;top:202px;transform:translate(0.40px,0.92px) rotate(0.03deg) scaleX(0.8860);font-size:8.5px;color:#3a3a3a;">Ray</span>
<span class="t" style="left:978px;top:203px;transform:translate(0.40px,0.91px) rotate(0.03deg);font-size:6px;color:#3a3a3a;">…</span>
<span class="t" style="left:961px;top:212px;transform:translate(0.80px,0.92px) rotate(0.03deg) scaleX(1.0076);font-size:8.5px;color:#3a3a3a;">bleu</span>
<span class="t" style="left:961px;top:222px;transform:translate(0.80px,0.92px) rotate(0.03deg) scaleX(1.0389);font-size:8.5px;color:#3a3a3a;">clair</span>
<span class="t" style="left:395px;top:274px;transform:translate(0.30px,0.30px) rotate(0.03deg) scaleX(1.0807);font-size:9px;font-weight:700;color:#1a1a1a;-webkit-text-stroke:0.38px #1a1a1a;">019020594</span>
<span class="t" style="left:472px;top:274px;transform:translate(0.00px,0.12px) rotate(0.03deg) scaleX(0.9376);font-size:8.5px;">R BOUR</span>
<span class="t" style="left:514px;top:274px;transform:translate(0.00px,0.12px) rotate(0.03deg) scaleX(1.0734);font-size:8.5px;">28/04/2011</span>
<span class="t" style="left:572px;top:274px;transform:translate(0.20px,0.12px) rotate(0.03deg) scaleX(1.0144);font-size:8.5px;color:#e4727b;">En prêt</span>
<span class="t" style="left:660px;top:244px;transform:translate(0.50px,0.22px) rotate(0.03deg) scaleX(1.0295);font-size:8.5px;font-weight:700;color:#1e1e1e;">Le testament d'Ariane / Françoise Bourdin (Texte) [P. Belfond : 2011]</span>
<span class="t" style="left:650px;top:254px;transform:translate(0.00px,0.15px) rotate(0.03deg) scaleX(1.0339);font-size:8.5px;color:#3a3a3a;">Médiathèque John Lennon - SIN - Langues et littératures - Adulte - R BOUR -</span>
<span class="t" style="left:650px;top:264px;transform:translate(0.00px,0.08px) rotate(0.03deg) scaleX(1.0422);font-size:8.5px;color:#3a3a3a;">Imprimé</span>
<span class="t" style="left:650px;top:274px;transform:translate(0.00px,0.01px) rotate(0.03deg) scaleX(0.9808);font-size:8.5px;color:#3a3a3a;">Acquéreur : Médiathèque John Lennon - CULTURE &amp; LOISIRS (INTERMARCHE)</span>
<span class="t" style="left:650px;top:283px;transform:translate(0.00px,0.94px) rotate(0.03deg) scaleX(1.0165);font-size:8.5px;color:#3a3a3a;">- Prix : 20.50 - Prix remisé : 18.66</span>
<span class="t" style="left:660px;top:303px;transform:translate(0.50px,0.80px) rotate(0.03deg) scaleX(0.9941);font-size:8.5px;color:#3a3a3a;">1 note</span>
<span class="t" style="left:395px;top:350px;transform:translate(0.30px,0.50px) rotate(0.03deg) scaleX(1.0807);font-size:9px;font-weight:700;color:#1a1a1a;-webkit-text-stroke:0.38px #1a1a1a;">019021552</span>
<span class="t" style="left:472px;top:350px;transform:translate(0.00px,0.32px) rotate(0.03deg) scaleX(0.9376);font-size:8.5px;">R BOUR</span>
<span class="t" style="left:514px;top:350px;transform:translate(0.00px,0.32px) rotate(0.03deg) scaleX(1.0577);font-size:8.5px;">16/03/2012</span>
<span class="t" style="left:572px;top:350px;transform:translate(0.20px,0.32px) rotate(0.03deg) scaleX(1.0144);font-size:8.5px;color:#e4727b;">En prêt</span>
<span class="t" style="left:660px;top:320px;transform:translate(0.50px,0.62px) rotate(0.03deg) scaleX(1.0148);font-size:8.5px;font-weight:700;color:#1e1e1e;">Dans les pas d'Ariane / Françoise Bourdin (Texte) [P. Belfond : 2011]</span>
<span class="t" style="left:650px;top:330px;transform:translate(0.00px,0.55px) rotate(0.03deg) scaleX(1.0339);font-size:8.5px;color:#3a3a3a;">Médiathèque John Lennon - SIN - Langues et littératures - Adulte - R BOUR -</span>
<span class="t" style="left:650px;top:340px;transform:translate(0.00px,0.48px) rotate(0.03deg) scaleX(1.0422);font-size:8.5px;color:#3a3a3a;">Imprimé</span>
<span class="t" style="left:650px;top:350px;transform:translate(0.00px,0.41px) rotate(0.03deg) scaleX(1.0206);font-size:8.5px;color:#3a3a3a;">Acquéreur : Médiathèque John Lennon - D.o.N. - Prix : 20.50 - Prix remisé :</span>
<span class="t" style="left:650px;top:360px;transform:translate(0.00px,0.34px) rotate(0.03deg) scaleX(1.0479);font-size:8.5px;color:#3a3a3a;">20.50</span>
<span class="t" style="left:660px;top:380px;transform:translate(0.50px,0.20px) rotate(0.03deg) scaleX(0.9681);font-size:8.5px;color:#3a3a3a;">1 piège</span>
<span class="t" style="left:395px;top:416px;transform:translate(0.30px,0.80px) rotate(0.03deg) scaleX(1.0252);font-size:9px;font-weight:700;color:#1a1a1a;-webkit-text-stroke:0.38px #1a1a1a;">019103677</span>
<span class="t" style="left:472px;top:416px;transform:translate(0.00px,0.62px) rotate(0.03deg) scaleX(0.9024);font-size:8.5px;">R BOIS</span>
<span class="t" style="left:514px;top:416px;transform:translate(0.00px,0.62px) rotate(0.03deg) scaleX(1.0577);font-size:8.5px;">19/06/2014</span>
<span class="t" style="left:572px;top:416px;transform:translate(0.20px,0.62px) rotate(0.03deg) scaleX(1.0276);font-size:8.5px;color:#2b9a2b;">Disponible</span>
<span class="t" style="left:660px;top:396px;transform:translate(0.50px,0.92px) rotate(0.03deg) scaleX(1.0170);font-size:8.5px;font-weight:700;color:#1e1e1e;">Sans oublier : roman / Ariane Bois (Texte) [P. Belfond : 2014]</span>
<span class="t" style="left:650px;top:406px;transform:translate(0.00px,0.85px) rotate(0.03deg) scaleX(1.0366);font-size:8.5px;color:#3a3a3a;">Médiathèque John Lennon - SIN - Langues et littératures - Adulte - R BOIS -</span>
<span class="t" style="left:650px;top:416px;transform:translate(0.00px,0.78px) rotate(0.03deg) scaleX(1.0422);font-size:8.5px;color:#3a3a3a;">Imprimé</span>
<span class="t" style="left:650px;top:426px;transform:translate(0.00px,0.71px) rotate(0.03deg) scaleX(1.0245);font-size:8.5px;color:#3a3a3a;">Acquéreur : Médiathèque John Lennon - Decitre - Prix : 19.50 - Prix remisé :</span>
<span class="t" style="left:650px;top:436px;transform:translate(0.00px,0.64px) rotate(0.03deg) scaleX(0.9868);font-size:8.5px;color:#3a3a3a;">17.74</span>
</div>
<svg class="b" style="left:987px;top:149px" width="8" height="77"><rect x="1.6" y="1" width="4.6" height="74.5" rx="2.3" fill="#a9a9a9"/></svg>
<svg class="b" style="left:337px;top:445px" width="32" height="26"><rect x="2" y="1.8" width="27.8" height="22.7" rx="2.5" fill="#fff" stroke="#ececec" stroke-width="1"/></svg>
<svg class="b" style="left:368px;top:445px" width="30" height="26"><rect x="1.7" y="1.8" width="26.2" height="22.7" rx="2.5" fill="#fff" stroke="#ececec" stroke-width="1"/></svg>
<svg class="b" style="left:471px;top:445px" width="30" height="26"><rect x="2" y="1.8" width="26.5" height="22.7" rx="2.5" fill="#fff" stroke="#ececec" stroke-width="1"/></svg>
<svg class="b" style="left:501px;top:445px" width="30" height="26"><rect x="1.5" y="1.8" width="26.4" height="22.7" rx="2.5" fill="#fff" stroke="#ececec" stroke-width="1"/></svg>
<svg class="b" style="left:531px;top:445px" width="31" height="26"><rect x="2.1" y="1.8" width="26.8" height="22.7" rx="2.5" fill="#fff" stroke="#d9d9d9" stroke-width="1"/></svg>
<svg class="b" style="left:427px;top:450px" width="18" height="16"><rect x="2.1" y="2.2" width="14.2" height="12" rx="2" fill="#fff" stroke="#d4d4d4" stroke-width="1"/></svg>
<svg class="i" style="left:346.30px;top:451.50px;width:13.40px;height:13.40px;color:#c6c6c6;stroke-width:1.8;" viewBox="0 0 24 24"><path d="M11 12l7.500-5v10zM2.500 12l7.500-5v10z" /></svg>
<svg class="i" style="left:375.90px;top:451.50px;width:13.40px;height:13.40px;color:#c6c6c6;stroke-width:1.8;" viewBox="0 0 24 24"><path d="M8 12l10-6.500v13zM5 5v14"/></svg>
<svg class="i" style="left:479.60px;top:451.50px;width:13.40px;height:13.40px;color:#c6c6c6;stroke-width:1.8;" viewBox="0 0 24 24"><path d="M16 12L6 5.500v13zM19 5v14"/></svg>
<svg class="i" style="left:508.90px;top:451.50px;width:13.40px;height:13.40px;color:#c6c6c6;stroke-width:1.8;" viewBox="0 0 24 24"><path d="M13 12L5.500 7v10zM21.500 12L14 7v10z"/></svg>
<svg class="i" style="left:540.40px;top:452.20px;width:12.00px;height:12.00px;color:#3a3a3a;stroke-width:2.2;" viewBox="0 0 24 24"><path d="M3.500 11a8.500 8.500 0 0 1 15.500-4M20.500 13a8.500 8.500 0 0 1-15.500 4"/><path d="M19.500 2.500v5h-5M4.500 21.500v-5h5"/></svg>
<span class="t" style="left:397px;top:452px;transform:translate(0.30px,0.50px) rotate(0.03deg);font-size:9.3px;color:#8a8a8a;-webkit-text-stroke:0.5px #8a8a8a;">|</span>
<span class="t" style="left:402px;top:452px;transform:translate(0.00px,0.50px) rotate(0.03deg) scaleX(0.9669);font-size:9.3px;">Page</span>
<span class="t" style="left:434px;top:452px;transform:translate(0.30px,0.33px) rotate(0.03deg);font-size:8.8px;color:#2a2a2a;-webkit-text-stroke:0.3px #2a2a2a;">1</span>
<span class="t" style="left:447px;top:452px;transform:translate(0.00px,0.50px) rotate(0.03deg) scaleX(0.9917);font-size:9.3px;">sur 1</span>
<span class="t" style="left:469px;top:452px;transform:translate(0.80px,0.50px) rotate(0.03deg);font-size:9.3px;color:#8a8a8a;-webkit-text-stroke:0.5px #8a8a8a;">|</span>
<span class="t" style="left:530px;top:452px;transform:translate(0.30px,0.50px) rotate(0.03deg);font-size:9.3px;color:#8a8a8a;-webkit-text-stroke:0.5px #8a8a8a;">|</span>
<span class="t" style="left:875px;top:452px;transform:translate(0.00px,0.50px) rotate(0.03deg);font-size:9.3px;">Page courante 1 - 17 sur 17</span>
</div>
</body>
</html>
